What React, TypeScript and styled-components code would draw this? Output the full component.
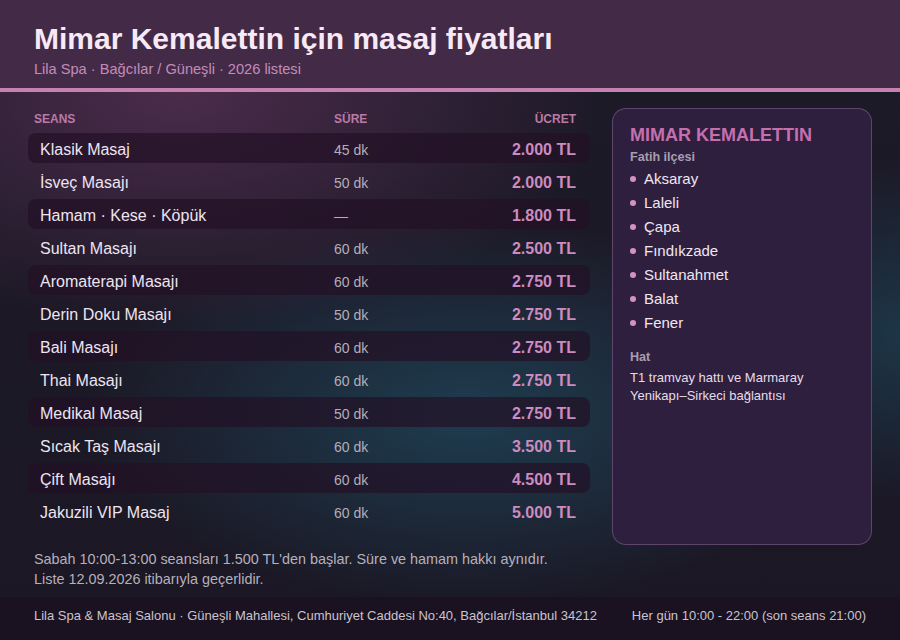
import React from "react";
import styled, { createGlobalStyle } from "styled-components";

const Global = createGlobalStyle`
  html, body { margin: 0; padding: 0; background: #1a1320; }
  body { font-family: "Liberation Sans", Arial, sans-serif; }
  * { box-sizing: border-box; }
`;

const Page = styled.div`
  width: 900px;
  height: 640px;
  display: flex;
  flex-direction: column;
  overflow: hidden;
  background: #1b1724;
`;

const Header = styled.header`
  height: 92px;
  flex: none;
  padding: 21px 34px 0;
  background: #432b48;
  border-bottom: 4px solid #c481b2;
`;

const Title = styled.h1`
  margin: 0;
  font-size: 30px;
  line-height: 36px;
  font-weight: 700;
  color: #f8e9f6;
`;

const Subtitle = styled.div`
  margin-top: 3px;
  font-size: 14.6px;
  line-height: 18px;
  color: #c48bba;
`;

const Main = styled.main`
  flex: 1;
  display: flex;
  flex-direction: column;
  padding: 16px 28px 0;
  background:
    radial-gradient(ellipse 540px 300px at 20% 0%, rgba(92, 50, 88, 0.72), transparent 78%),
    radial-gradient(ellipse 520px 260px at 52% 64%, rgba(30, 70, 90, 0.8), transparent 75%),
    radial-gradient(ellipse 220px 230px at 100% 48%, rgba(28, 64, 82, 0.75), transparent 75%),
    linear-gradient(180deg, #1d1a28 0%, #1b1724 100%);
`;

const Content = styled.div`
  flex: 1;
  display: grid;
  grid-template-columns: 562px 260px;
  column-gap: 22px;
  align-items: stretch;
`;

const Table = styled.div`
  display: flex;
  flex-direction: column;
  padding-top: 1px;
`;

const HeadRow = styled.div`
  display: grid;
  grid-template-columns: 300px 1fr auto;
  padding: 0 14px 0 6px;
  height: 20px;
  line-height: 20px;
  margin-bottom: 4px;
  font-size: 12px;
  font-weight: 700;
  color: #b97aa8;
  text-transform: uppercase;
`;

const Row = styled.div<{ $band: boolean }>`
  display: grid;
  grid-template-columns: 294px 1fr auto;
  align-items: center;
  height: 30px;
  margin-bottom: 3px;
  padding: 3px 14px 0 12px;
  border-radius: 8px;
  background: ${(p) => (p.$band ? "rgba(34, 16, 38, 0.72)" : "transparent")};
`;

const Name = styled.span`
  font-size: 16px;
  color: #eee4f0;
`;

const Dur = styled.span`
  font-size: 14px;
  color: #b5adb9;
`;

const Price = styled.span`
  font-size: 16px;
  font-weight: 700;
  color: #cd8bc0;
  text-align: right;
`;

const Card = styled.aside`
  background: #2f1f3e;
  border: 1px solid rgba(150, 115, 165, 0.45);
  border-radius: 14px;
  padding: 15px 17px;
`;

const CardTitle = styled.div`
  font-size: 18px;
  line-height: 22px;
  font-weight: 700;
  color: #c470ad;
`;

const CardSub = styled.div<{ $gap?: number }>`
  margin-top: ${(p) => p.$gap ?? 3}px;
  font-size: 12.6px;
  line-height: 16px;
  font-weight: 700;
  color: #a99db0;
`;

const List = styled.ul`
  list-style: none;
  margin: 1px 0 0;
  padding: 0;
`;

const Item = styled.li`
  display: flex;
  align-items: center;
  gap: 8px;
  height: 24px;
  font-size: 15px;
  color: #f0e6f2;
  &::before {
    content: "";
    width: 6px;
    height: 6px;
    border-radius: 50%;
    background: #d590c6;
    margin-top: 2px;
  }
`;

const LineText = styled.div`
  margin-top: 4px;
  font-size: 13px;
  line-height: 18px;
  color: #e6dce9;
`;

const Notes = styled.div`
  padding: 4px 6px 8px;
  font-size: 14.4px;
  line-height: 20px;
  color: #b6b0bc;
`;

const Footer = styled.footer`
  flex: none;
  height: 43px;
  display: flex;
  align-items: center;
  justify-content: space-between;
  padding: 0 34px 6px;
  background: #1a1220;
  font-size: 13px;
  color: #cbc3cf;
`;

const rows: [string, string, string][] = [
  ["Klasik Masaj", "45 dk", "2.000 TL"],
  ["İsveç Masajı", "50 dk", "2.000 TL"],
  ["Hamam · Kese · Köpük", "—", "1.800 TL"],
  ["Sultan Masajı", "60 dk", "2.500 TL"],
  ["Aromaterapi Masajı", "60 dk", "2.750 TL"],
  ["Derin Doku Masajı", "50 dk", "2.750 TL"],
  ["Bali Masajı", "60 dk", "2.750 TL"],
  ["Thai Masajı", "60 dk", "2.750 TL"],
  ["Medikal Masaj", "50 dk", "2.750 TL"],
  ["Sıcak Taş Masajı", "60 dk", "3.500 TL"],
  ["Çift Masajı", "60 dk", "4.500 TL"],
  ["Jakuzili VIP Masaj", "60 dk", "5.000 TL"],
];

const places = ["Aksaray", "Laleli", "Çapa", "Fındıkzade", "Sultanahmet", "Balat", "Fener"];

export default function App() {
  return (
    <Page>
      <Global />
      <Header>
        <Title>Mimar Kemalettin için masaj fiyatları</Title>
        <Subtitle>Lila Spa · Bağcılar / Güneşli · 2026 listesi</Subtitle>
      </Header>
      <Main>
        <Content>
          <Table>
            <HeadRow>
              <span>Seans</span>
              <span>Süre</span>
              <span>Ücret</span>
            </HeadRow>
            {rows.map(([n, d, p], i) => (
              <Row key={n} $band={i % 2 === 0}>
                <Name>{n}</Name>
                <Dur>{d}</Dur>
                <Price>{p}</Price>
              </Row>
            ))}
          </Table>
          <Card>
            <CardTitle>MIMAR KEMALETTIN</CardTitle>
            <CardSub>Fatih ilçesi</CardSub>
            <List>
              {places.map((p) => (
                <Item key={p}>{p}</Item>
              ))}
            </List>
            <CardSub $gap={15}>Hat</CardSub>
            <LineText>
              T1 tramvay hattı ve Marmaray
              <br />
              Yenikapı–Sirkeci bağlantısı
            </LineText>
          </Card>
        </Content>
        <Notes>
          Sabah 10:00-13:00 seansları 1.500 TL'den başlar. Süre ve hamam hakkı aynıdır.
          <br />
          Liste 12.09.2026 itibarıyla geçerlidir.
        </Notes>
      </Main>
      <Footer>
        <span>Lila Spa &amp; Masaj Salonu · Güneşli Mahallesi, Cumhuriyet Caddesi No:40, Bağcılar/İstanbul 34212</span>
        <span>Her gün 10:00 - 22:00 (son seans 21:00)</span>
      </Footer>
    </Page>
  );
}
